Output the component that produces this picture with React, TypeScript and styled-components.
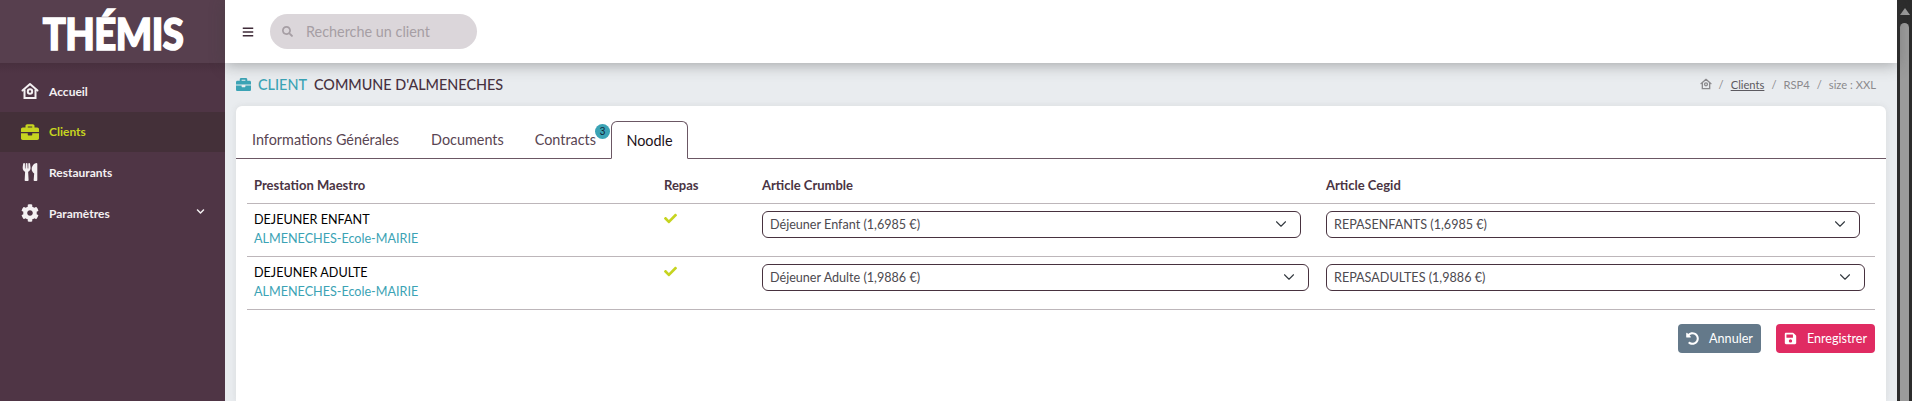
import styled, { createGlobalStyle } from 'styled-components';
import { FaBars, FaBriefcase, FaCheck, FaChevronDown, FaCog, FaSave, FaSearch, FaUndoAlt, FaUtensils } from 'react-icons/fa';

const GlobalStyle = createGlobalStyle`
  html, body {
    margin: 0;
    height: 100%;
    overflow: hidden;
    background: #e9ecef;
    font-family: Lato, "Liberation Sans", sans-serif;
  }
  #root { height: 100%; }
`;

// === LAYOUT ===

const Viewport = styled.div`
  display: flex;
  height: 401px;
  overflow: hidden;
`;

const Sidebar = styled.aside`
  width: 225px;
  flex: none;
  background: #4f3545;
  display: flex;
  flex-direction: column;
`;

const LogoBox = styled.div`
  height: 63px;
  background: #573f4e;
  display: flex;
  align-items: center;
  justify-content: center;
`;

const Logo = styled.div`
  color: #fff;
  font-size: 43px;
  font-weight: 900;
  line-height: 1;
  letter-spacing: -0.6px;
  margin-top: 3px;
  -webkit-text-stroke: 1.6px #fff;
  transform: scaleX(0.89);
`;

const Nav = styled.nav`
  padding-top: 8px;
  background: linear-gradient(#48303e, #4f3545 10px);
  flex: 1;
`;

const NavItem = styled.div<{ $active?: boolean }>`
  height: 40.6px;
  display: flex;
  align-items: center;
  padding: 0 20px 0 21px;
  gap: 10px;
  background: ${({ $active }) => ($active ? '#443039' : 'transparent')};
  color: ${({ $active }) => ($active ? '#c6d420' : '#f4f0f2')};
  font-size: 12px;
  font-weight: 700;
`;

const NavIcon = styled.span`
  width: 18px;
  height: 18px;
  display: flex;
  align-items: center;
  justify-content: center;
  font-size: 18px;
  flex: none;
`;

const NavLabel = styled.span`
  flex: 1;
`;

const NavCaret = styled.span`
  display: flex;
  font-size: 9px;
  margin-bottom: 3px;
`;

const Main = styled.div`
  flex: 1;
  min-width: 0;
  display: flex;
  flex-direction: column;
`;

const Topbar = styled.header`
  height: 63px;
  flex: none;
  background: #fff;
  display: flex;
  align-items: center;
  padding: 0 0 0 17px;
  gap: 16px;
  box-shadow: 0 2px 14px rgba(60, 60, 60, 0.4);
  position: relative;
  font-size: 12px;
  color: #3f2b38;
`;

const SearchBox = styled.div`
  width: 207px;
  height: 35px;
  border-radius: 18px;
  background: #dbd6da;
  display: flex;
  align-items: center;
  padding-left: 12px;
  gap: 13px;
  color: #a69ea4;
  font-size: 14.4px;
  box-sizing: border-box;
`;

const Content = styled.main`
  flex: 1;
  padding: 0 11px;
  display: flex;
  flex-direction: column;
`;

const TitleRow = styled.div`
  height: 42px;
  margin-bottom: 1px;
  display: flex;
  align-items: center;
  flex: none;
`;

const TitleIcon = styled.span`
  color: #3ba3b5;
  font-size: 15px;
  display: flex;
  margin-right: 7px;
`;

const TitleKind = styled.span`
  color: #3ba3b5;
  font-size: 14.4px;
  font-weight: 500;
  margin-right: 7px;
`;

const TitleName = styled.span`
  color: #48323f;
  font-size: 14.4px;
  font-weight: 500;
  flex: 1;
`;

const Breadcrumb = styled.div`
  display: flex;
  align-items: center;
  gap: 7px;
  margin-right: 10px;
  font-size: 11.2px;
  color: #8b8a8d;
`;

const CrumbLink = styled.a`
  color: #5c5a60;
  text-decoration: underline;
`;

const Card = styled.section`
  flex: 1;
  background: #fff;
  border-radius: 6px 6px 0 0;
  box-shadow: 0 0 6px rgba(120, 120, 120, 0.14);
  padding-top: 15px;
`;

// === TABS ===

const TabBar = styled.div`
  height: 37px;
  display: flex;
  align-items: stretch;
  border-bottom: 1px solid #6b5764;
  padding-left: 16px;
`;

const Tab = styled.div<{ $active?: boolean; $gap: number }>`
  position: relative;
  display: flex;
  align-items: center;
  justify-content: center;
  font-size: 14.4px;
  margin-right: ${({ $gap }) => $gap}px;
  color: ${({ $active }) => ($active ? '#1d1118' : '#594552')};
  ${({ $active }) =>
    $active &&
    `
    width: 77px;
    background: #fff;
    border: 1px solid #6b5764;
    border-bottom: 1px solid #fff;
    border-radius: 6px 6px 0 0;
    margin-bottom: -1px;
    box-sizing: border-box;
  `}
`;

const TabBadge = styled.span`
  position: absolute;
  top: 3px;
  right: -14px;
  width: 15px;
  height: 15px;
  border-radius: 50%;
  background: #3ba3b5;
  color: #123;
  font: 10px "Liberation Sans", sans-serif;
  display: flex;
  align-items: center;
  justify-content: center;
`;

// === TABLE ===

const TableWrap = styled.div`
  padding: 0 11px;
`;

const Table = styled.table`
  width: 100%;
  table-layout: fixed;
  border-collapse: collapse;
`;

const Th = styled.th<{ $w: number }>`
  width: ${({ $w }) => $w}px;
  height: 44px;
  padding: 8px 7px 0;
  text-align: left;
  font-size: 13px;
  font-weight: 700;
  color: #4a3443;
  border-bottom: 1px solid #bdb6ba;
  box-sizing: border-box;
`;

const Td = styled.td`
  height: 53px;
  box-sizing: border-box;
  padding: 6px 7px 5px;
  vertical-align: top;
  border-bottom: 1px solid #bdb6ba;
`;

const RowTitle = styled.div`
  color: #000;
  font-size: 12.6px;
  line-height: 19px;
`;

const RowSub = styled.div`
  color: #3ba3b5;
  font-size: 12.6px;
  line-height: 19px;
`;

const Tick = styled.span`
  color: #c6d420;
  font-size: 13px;
  display: block;
  line-height: 1;
  margin-top: 2px;
`;

const Select = styled.select<{ $w: number }>`
  display: block;
  appearance: none;
  width: ${({ $w }) => $w}px;
  height: 27px;
  margin-top: 1px;
  padding: 0 32px 0 7px;
  border: 1px solid #48323f;
  border-radius: 6px;
  background-color: #fff;
  background-image: url("data:image/svg+xml,%3csvg xmlns='http://www.w3.org/2000/svg' viewBox='0 0 16 16'%3e%3cpath fill='none' stroke='%23343a40' stroke-linecap='round' stroke-linejoin='round' stroke-width='1.5' d='m2 5 6 6 6-6'/%3e%3c/svg%3e");
  background-repeat: no-repeat;
  background-position: right 11px center;
  background-size: 16px 12px;
  color: #4d4a50;
  font-family: inherit;
  font-size: 12.6px;
`;

// === ACTIONS ===

const Actions = styled.div`
  display: flex;
  justify-content: flex-end;
  gap: 15px;
  margin-top: 14px;
`;

const Button = styled.button<{ $color: string; $w: number }>`
  width: ${({ $w }) => $w}px;
  height: 29px;
  border: none;
  border-radius: 4px;
  background: ${({ $color }) => $color};
  color: #fff;
  font-family: inherit;
  font-size: 12.6px;
  display: flex;
  align-items: center;
  justify-content: center;
  gap: 10px;
  padding: 0;
`;

// === SCROLLBAR ===

const Scrollbar = styled.div`
  width: 15px;
  flex: none;
  background: #2c2c2c;
  display: flex;
  flex-direction: column;
  align-items: center;
`;

const ScrollArrow = styled.div`
  margin-top: 8px;
  border-left: 5px solid transparent;
  border-right: 5px solid transparent;
  border-bottom: 7px solid #9b9b9b;
`;

const ScrollThumb = styled.div`
  margin-top: 8px;
  width: 9px;
  flex: 1;
  background: #9b9b9b;
  border-radius: 5px 5px 0 0;
`;

// === DATA ===

const HomeIcon = ({ size }: { size: number }) => (
  <svg width={size} height={size} viewBox="0 0 18 18" fill="none" stroke="currentColor" strokeWidth="2">
    <path d="M1.5 8.5 9 2l7.5 6.5" strokeLinecap="round" strokeLinejoin="round" />
    <path d="M3.5 7.5V16h11V7.5" />
    <circle cx="9" cy="9.5" r="2.2" />
  </svg>
);

const rows = [
  {
    title: 'DEJEUNER ENFANT',
    crumble: 'Déjeuner Enfant (1,6985 €)',
    crumbleW: 539,
    cegid: 'REPASENFANTS (1,6985 €)',
    cegidW: 534,
  },
  {
    title: 'DEJEUNER ADULTE',
    crumble: 'Déjeuner Adulte (1,9886 €)',
    crumbleW: 547,
    cegid: 'REPASADULTES (1,9886 €)',
    cegidW: 539,
  },
];

export default function App() {
  return (
    <Viewport>
      <GlobalStyle />
      <Sidebar>
        <LogoBox>
          <Logo>THÉMIS</Logo>
        </LogoBox>
        <Nav>
          <NavItem>
            <NavIcon><HomeIcon size={18} /></NavIcon>
            <NavLabel>Accueil</NavLabel>
          </NavItem>
          <NavItem $active>
            <NavIcon><FaBriefcase /></NavIcon>
            <NavLabel>Clients</NavLabel>
          </NavItem>
          <NavItem>
            <NavIcon><FaUtensils /></NavIcon>
            <NavLabel>Restaurants</NavLabel>
          </NavItem>
          <NavItem>
            <NavIcon><FaCog /></NavIcon>
            <NavLabel>Paramètres</NavLabel>
            <NavCaret><FaChevronDown /></NavCaret>
          </NavItem>
        </Nav>
      </Sidebar>

      <Main>
        <Topbar>
          <FaBars size={12} />
          <SearchBox>
            <FaSearch size={11} />
            Recherche un client
          </SearchBox>
        </Topbar>
        <Content>
          <TitleRow>
            <TitleIcon><FaBriefcase /></TitleIcon>
            <TitleKind>CLIENT</TitleKind>
            <TitleName>COMMUNE D'ALMENECHES</TitleName>
            <Breadcrumb>
              <HomeIcon size={12} />
              <span>/</span>
              <CrumbLink>Clients</CrumbLink>
              <span>/</span>
              <span>RSP4</span>
              <span>/</span>
              <span>size : XXL</span>
            </Breadcrumb>
          </TitleRow>
          <Card>
            <TabBar>
              <Tab $gap={32}>Informations Générales</Tab>
              <Tab $gap={31}>Documents</Tab>
              <Tab $gap={15}>
                Contracts
                <TabBadge>3</TabBadge>
              </Tab>
              <Tab $active $gap={0}>Noodle</Tab>
            </TabBar>
            <TableWrap>
              <Table>
                <thead>
                  <tr>
                    <Th $w={410}>Prestation Maestro</Th>
                    <Th $w={98}>Repas</Th>
                    <Th $w={564}>Article Crumble</Th>
                    <Th $w={556}>Article Cegid</Th>
                  </tr>
                </thead>
                <tbody>
                  {rows.map(row => (
                    <tr key={row.title}>
                      <Td>
                        <RowTitle>{row.title}</RowTitle>
                        <RowSub>ALMENECHES-Ecole-MAIRIE</RowSub>
                      </Td>
                      <Td><Tick><FaCheck /></Tick></Td>
                      <Td>
                        <Select $w={row.crumbleW} defaultValue={row.crumble}>
                          <option>{row.crumble}</option>
                        </Select>
                      </Td>
                      <Td>
                        <Select $w={row.cegidW} defaultValue={row.cegid}>
                          <option>{row.cegid}</option>
                        </Select>
                      </Td>
                    </tr>
                  ))}
                </tbody>
              </Table>
              <Actions>
                <Button $color="#64798a" $w={83}><FaUndoAlt size={13} />Annuler</Button>
                <Button $color="#e02b62" $w={99}><FaSave size={13} />Enregistrer</Button>
              </Actions>
            </TableWrap>
          </Card>
        </Content>
      </Main>

      <Scrollbar>
        <ScrollArrow />
        <ScrollThumb />
      </Scrollbar>
    </Viewport>
  );
}
